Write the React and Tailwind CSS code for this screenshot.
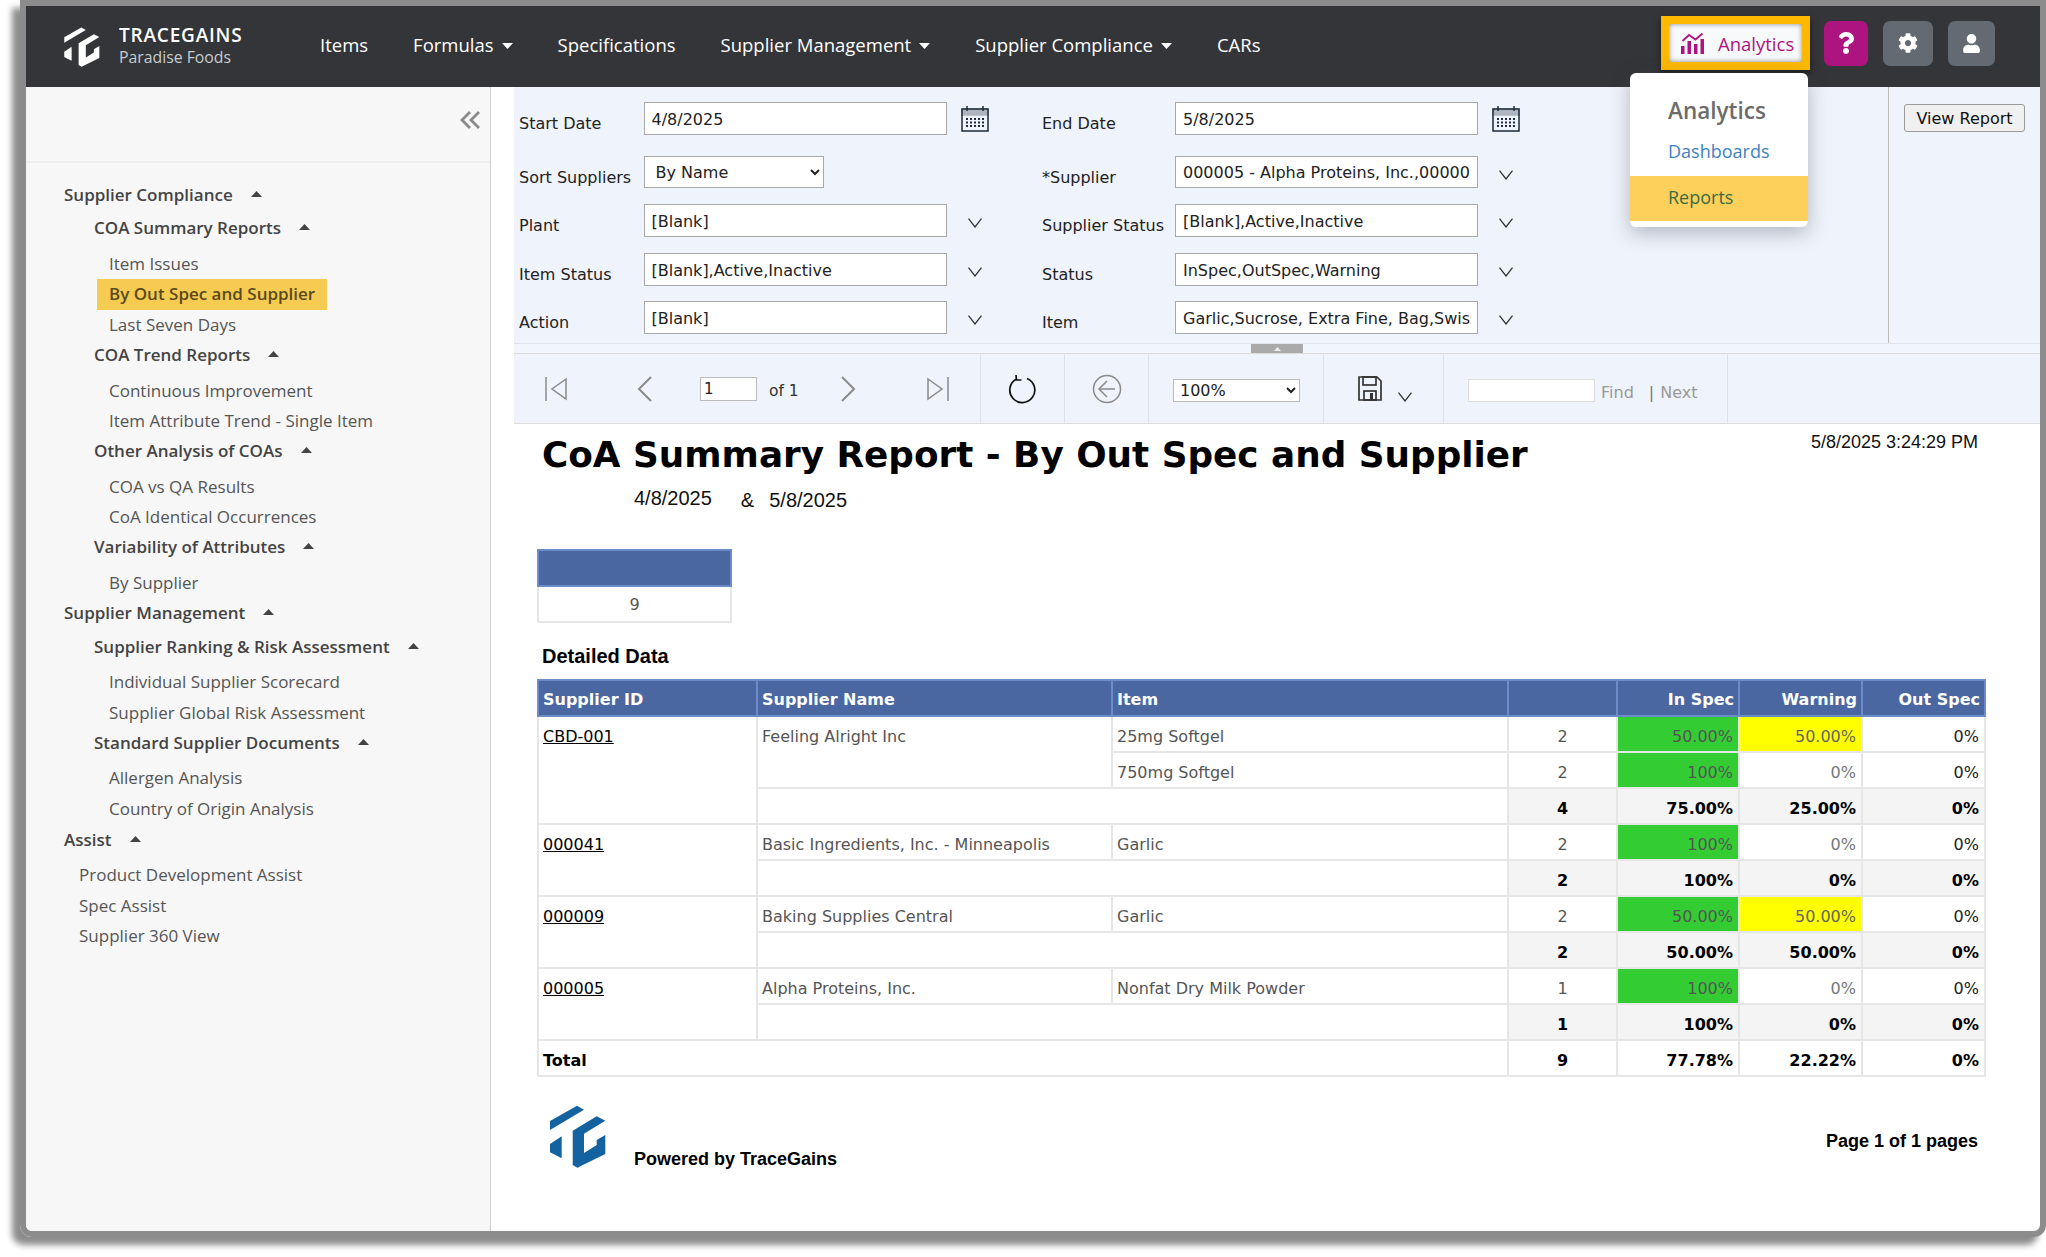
import React from "react";
import { FaCog, FaUser, FaQuestion } from "react-icons/fa";

const Logo = ({ className }) => (
  <svg viewBox="0 0 56 63" className={className} fill="currentColor">
    <polygon points="0,16 27,0.7 34,4.7 0,25" />
    <polygon points="0,39 11.7,31.3 11.7,53.3 0,47.3" />
    <polygon points="22.7,25.7 46.7,11.3 55.3,15.7 34,28.7 34,48 46.7,40 46.7,35 55.3,30 55.3,49 27.3,62.7 22.7,60" />
  </svg>
);

const CaretDown = () => (
  <svg width="11" height="6" viewBox="0 0 11 6" className="ml-[8px] mt-[2px]" fill="currentColor"><polygon points="0,0 11,0 5.5,6" /></svg>
);
const CaretUp = ({ className }) => (
  <svg width="11" height="6" viewBox="0 0 11 6" className={className} fill="#444"><polygon points="0,6 11,6 5.5,0" /></svg>
);

const Chevron = ({ className = "" }) => (
  <svg width="14" height="10" viewBox="0 0 14 10" fill="none" stroke="#333" strokeWidth="1.3" className={className}><polyline points="0.5,0.7 7,9 13.5,0.7" /></svg>
);

const Calendar = () => (
  <svg width="28" height="26" viewBox="0 0 28 26" fill="none" stroke="#1d2a3a" strokeWidth="1.5" className="shrink-0">
    <rect x="1" y="3" width="26" height="22" />
    <rect x="1" y="3" width="26" height="6" fill="#1d2a3a" opacity="0.3" />
    <line x1="6" y1="0" x2="6" y2="5" /><line x1="22" y1="0" x2="22" y2="5" />
    <g fill="#1d2a3a" stroke="none">
      {[12, 15.5, 19].map((y) => [6, 10, 14, 18, 22].map((x) => <rect key={x + "-" + y} x={x - 1} y={y} width="2" height="2" />))}
    </g>
  </svg>
);

const sideItems = [
  [1, "Supplier Compliance"], [2, "COA Summary Reports"], [3, "Item Issues"], [4, "By Out Spec and Supplier"], [3, "Last Seven Days"],
  [2, "COA Trend Reports"], [3, "Continuous Improvement"], [3, "Item Attribute Trend - Single Item"],
  [2, "Other Analysis of COAs"], [3, "COA vs QA Results"], [3, "CoA Identical Occurrences"],
  [2, "Variability of Attributes"], [3, "By Supplier"],
  [1, "Supplier Management"], [2, "Supplier Ranking & Risk Assessment"], [3, "Individual Supplier Scorecard"], [3, "Supplier Global Risk Assessment"],
  [2, "Standard Supplier Documents"], [3, "Allergen Analysis"], [3, "Country of Origin Analysis"],
  [6, "Assist"], [5, "Product Development Assist"], [5, "Spec Assist"], [5, "Supplier 360 View"],
];

const SideItem = ({ level, text }) => {
  if (level === 1) return <div className="flex items-center h-[31px] mb-[3px] pl-[38px] font-semibold text-[#444]">{text}<CaretUp className="ml-[18px] -mt-[2px]" /></div>;
  if (level === 6) return <div className="flex items-center h-[31px] mt-[1px] mb-[4px] pl-[38px] font-semibold text-[#444]">{text}<CaretUp className="ml-[18px] -mt-[2px]" /></div>;
  if (level === 2) return <div className="flex items-center h-[30px] mb-[5px] pl-[68px] font-semibold text-[#444]">{text}<CaretUp className="ml-[18px] -mt-[2px]" /></div>;
  if (level === 4) return <div className="flex items-center h-[31px] ml-[71px] pl-[12px] w-[230px] bg-[#f6cb52] font-semibold text-[#5a4a1a]">{text}</div>;
  if (level === 5) return <div className="flex items-center h-[30.5px] pl-[53px] text-[#555]">{text}</div>;
  return <div className="flex items-center h-[30.5px] pl-[83px] text-[#555]">{text}</div>;
};

const Field = ({ value }) => (
  <input readOnly defaultValue={value} className="w-[303px] h-full shrink-0 bg-white border-[1.5px] border-[#a8a8a8] pl-[7px] pr-[6px] pt-[1px] text-[16px] text-[#222] outline-none" />
);

const ParamCell = ({ label, children, after, col = 1 }) => (
  <div className={`flex h-full items-stretch ${col === 1 ? "w-[523px]" : "w-[533px]"}`}>
    <div className={`shrink-0 text-[16px] text-[#222] whitespace-nowrap pt-[10px] ${col === 1 ? "w-[124.5px]" : "w-[133px]"}`}>{label}</div>
    {children}
    {after}
  </div>
);

const Dd = () => <div className="flex items-center pl-[21px] pt-[5px]"><Chevron /></div>;
const Cal = () => <div className="flex items-center pl-[14px]"><Calendar /></div>;

const Params = () => (
  <div className="flex h-[257px] bg-[#eff3fb] border-b border-[#dfe3ea] font-['DejaVu_Sans',sans-serif]">
    <div className="w-[1374px] flex flex-col pt-[15px] pl-[5px] shrink-0">
      <div className="flex h-[33px] mb-[21px]">
        <ParamCell label="Start Date" after={<Cal />}><Field value="4/8/2025" /></ParamCell>
        <ParamCell col={2} label="End Date" after={<Cal />}><Field value="5/8/2025" /></ParamCell>
      </div>
      <div className="flex h-[32px] mb-[16px]">
        <ParamCell label="Sort Suppliers">
          <select defaultValue="By Name" className="w-[180px] h-full bg-white border-[1.5px] border-[#a8a8a8] pl-[7px] text-[16px] text-[#222] outline-none">
            <option>By Name</option>
          </select>
        </ParamCell>
        <ParamCell col={2} label="*Supplier" after={<Dd />}><Field value="000005 - Alpha Proteins, Inc.,000009 - Baking" /></ParamCell>
      </div>
      <div className="flex h-[33px] mb-[16px]">
        <ParamCell label="Plant" after={<Dd />}><Field value="[Blank]" /></ParamCell>
        <ParamCell col={2} label="Supplier Status" after={<Dd />}><Field value="[Blank],Active,Inactive" /></ParamCell>
      </div>
      <div className="flex h-[33px] mb-[15px]">
        <ParamCell label="Item Status" after={<Dd />}><Field value="[Blank],Active,Inactive" /></ParamCell>
        <ParamCell col={2} label="Status" after={<Dd />}><Field value="InSpec,OutSpec,Warning" /></ParamCell>
      </div>
      <div className="flex h-[33px]">
        <ParamCell label="Action" after={<Dd />}><Field value="[Blank]" /></ParamCell>
        <ParamCell col={2} label="Item" after={<Dd />}><Field value="Garlic,Sucrose, Extra Fine, Bag,Swiss" /></ParamCell>
      </div>
    </div>
    <div className="flex-1 border-l-[1.5px] border-[#bbb] pt-[17px] pl-[15px]">
      <button className="w-[121px] h-[28px] bg-[#f0f0f0] border-[1.5px] border-[#9a9a9a] rounded-[3px] pt-[1px] text-[16px] text-[#111]">View Report</button>
    </div>
  </div>
);

const TbSec = ({ w, children }) => (
  <div className={`${w} h-full shrink-0 flex items-center border-r border-[#dde1e8]`}>{children}</div>
);

const Toolbar = () => (
  <div className="flex h-[70px] bg-[#eff3fb] border-b border-[#dcdcdc] text-[16px] font-['DejaVu_Sans',sans-serif]">
    <TbSec w="w-[467px]">
      <svg width="22" height="24" viewBox="0 0 22 24" fill="none" stroke="#8a8a8a" strokeWidth="1.5" className="ml-[31px]"><line x1="1" y1="0" x2="1" y2="24" /><polygon points="21,2 7,12 21,22" /></svg>
      <svg width="15" height="26" viewBox="0 0 15 26" fill="none" stroke="#8a8a8a" strokeWidth="2" className="ml-[70px]"><polyline points="14,1 2,13 14,25" /></svg>
      <input readOnly defaultValue="1" className="ml-[48px] w-[57px] h-[24px] bg-white border-[1.5px] border-[#bbb] px-[3px] text-[15px] text-[#222] outline-none" />
      <span className="ml-[12px] w-[72px] text-[15.5px] text-[#333] pt-[6px]">of 1</span>
      <svg width="15" height="26" viewBox="0 0 15 26" fill="none" stroke="#8a8a8a" strokeWidth="2"><polyline points="1,1 13,13 1,25" /></svg>
      <svg width="22" height="24" viewBox="0 0 22 24" fill="none" stroke="#8a8a8a" strokeWidth="1.5" className="ml-[71px]"><line x1="21" y1="0" x2="21" y2="24" /><polygon points="1,2 15,12 1,22" /></svg>
    </TbSec>
    <TbSec w="w-[84px]">
      <svg width="30" height="30" viewBox="0 0 30 30" fill="none" stroke="#111" strokeWidth="1.7" className="ml-[27px]"><path d="M19 4.5 A12.5 12.5 0 1 1 8.5 5" /><polyline points="8,1 8.5,6 13.5,6" /></svg>
    </TbSec>
    <TbSec w="w-[84px]">
      <svg width="30" height="30" viewBox="0 0 30 30" fill="none" stroke="#8a8a8a" strokeWidth="1.5" className="ml-[27px]"><circle cx="15" cy="15" r="13.5" /><line x1="7" y1="15" x2="23" y2="15" /><polyline points="15,7 7,15 15,23" /></svg>
    </TbSec>
    <TbSec w="w-[175px]">
      <select defaultValue="100%" className="ml-[24px] mt-[3px] w-[127px] h-[23px] bg-white border-[1.5px] border-[#bbb] pl-[2px] text-[16px] text-[#222] outline-none"><option>100%</option></select>
    </TbSec>
    <TbSec w="w-[120px]">
      <svg width="24" height="25" viewBox="0 0 24 25" fill="none" stroke="#333" strokeWidth="1.7" className="ml-[34px] shrink-0"><path d="M1 1 H19 L23 5 V24 H1 Z" /><rect x="5" y="1" width="13" height="8" /><rect x="6" y="15" width="12" height="9" /><rect x="12" y="17" width="3" height="7" fill="#333" stroke="none" /></svg>
      <Chevron className="ml-[16px] mt-[16px] w-[14px]" />
    </TbSec>
    <TbSec w="w-[284px]">
      <input readOnly className="ml-[24px] mt-[3px] w-[127px] h-[23px] bg-white border-[1.5px] border-[#ddd] outline-none" />
      <span className="ml-[6px] pt-[8px] text-[#999]">Find</span>
      <span className="ml-[15px] pt-[8px] text-[#777]">|</span>
      <span className="ml-[6px] pt-[8px] text-[#999]">Next</span>
    </TbSec>
  </div>
);

const cols = ["w-[219px]", "w-[355px]", "w-[396px]", "w-[109px]", "w-[122px]", "w-[123px]", "w-[123px]"];
const bd = "border-2 border-[#e6e6e6] pt-[5px]";
const Th = ({ children, right }) => <th className={`border-2 border-[#6b8bc9] bg-[#4a67a1] text-white font-bold h-[36px] px-[4px] pt-[3px] ${right ? "text-right" : "text-left"}`}>{children}</th>;
const num = `${bd} px-[5px] text-right`;

const Pct = ({ v, kind }) => {
  const on = v !== "0%";
  if (kind === "in") return <td className={`${num} bg-[#33cc33] text-[#555]`}>{v}</td>;
  if (kind === "warn") return <td className={`${num} ${on ? "bg-[#ffff00] text-[#666]" : "text-[#777]"}`}>{v}</td>;
  return <td className={`${num} text-[#222]`}>{v}</td>;
};

const DataRow = ({ n, a, b, c }) => (
  <>
    <td className={`${bd} text-center text-[#555]`}>{n}</td>
    <Pct v={a} kind="in" /><Pct v={b} kind="warn" /><Pct v={c} />
  </>
);

const SubRow = ({ n, a, b, c }) => (
  <tr className="h-[36px]">
    <td colSpan={2} className={bd}></td>
    <td className={`${bd} text-center bg-[#f4f4f4] font-bold text-black`}>{n}</td>
    {[a, b, c].map((v, i) => <td key={i} className={`${num} bg-[#f4f4f4] font-bold text-black`}>{v}</td>)}
  </tr>
);

const tdTop = "border-2 border-[#e6e6e6] align-top pt-[8px] px-[4px]";

const Group = ({ id, name, rows, sub }) => (
  <>
    {rows.map((r, i) => (
      <tr key={i} className="h-[36px]">
        {i === 0 && <td rowSpan={rows.length + 1} className={tdTop}><a className="underline text-black">{id}</a></td>}
        {i === 0 && <td rowSpan={rows.length} className={`${tdTop} text-[#555]`}>{name}</td>}
        <td className={`${bd} px-[4px] text-[#555]`}>{r[0]}</td>
        <DataRow n={r[1]} a={r[2]} b={r[3]} c={r[4]} />
      </tr>
    ))}
    <SubRow n={sub[0]} a={sub[1]} b={sub[2]} c={sub[3]} />
  </>
);

const Report = () => (
  <div className="bg-white pl-[23px] pr-[55px] relative">
    <div className="flex justify-between items-start font-['Liberation_Sans',sans-serif]">
      <h1 className="ml-[5px] mt-[8px] font-['DejaVu_Sans',sans-serif] font-bold text-[35.8px] leading-[46px] text-black whitespace-nowrap">CoA Summary Report - By Out Spec and Supplier</h1>
      <div className="text-[18px] leading-[22px] mt-[7px] mr-[7px] text-[#111]">5/8/2025 3:24:29 PM</div>
    </div>
    <div className="flex font-['Liberation_Sans',sans-serif] text-[20px] text-[#111] pl-[97px] mt-[8px] leading-[24px]">
      <span>4/8/2025</span><span className="ml-[29px] mt-[2px]">&amp;</span><span className="ml-[15px] mt-[2px]">5/8/2025</span>
    </div>
    <div className="mt-[37px] w-[195px] text-[16px] font-['DejaVu_Sans',sans-serif]">
      <div className="h-[38px] bg-[#4a67a1] border-2 border-[#6b8bc9]"></div>
      <div className="h-[36px] pt-[2px] border-x-2 border-b-2 border-[#e6e6e6] flex items-center justify-center text-[#555]">9</div>
    </div>
    <div className="ml-[5px] mt-[21px] font-['Liberation_Sans',sans-serif] font-bold text-[20px] leading-[24px] text-black">Detailed Data</div>
    <table className="mt-[11px] table-fixed border-collapse w-[1447px] text-[16px] font-['DejaVu_Sans',sans-serif]">
      <colgroup>{cols.map((c, i) => <col key={i} className={c} />)}</colgroup>
      <thead>
        <tr>
          <Th>Supplier ID</Th><Th>Supplier Name</Th><Th>Item</Th><Th></Th><Th right>In Spec</Th><Th right>Warning</Th><Th right>Out Spec</Th>
        </tr>
      </thead>
      <tbody>
        <Group id="CBD-001" name="Feeling Alright Inc" rows={[["25mg Softgel", 2, "50.00%", "50.00%", "0%"], ["750mg Softgel", 2, "100%", "0%", "0%"]]} sub={[4, "75.00%", "25.00%", "0%"]} />
        <Group id="000041" name="Basic Ingredients, Inc. - Minneapolis" rows={[["Garlic", 2, "100%", "0%", "0%"]]} sub={[2, "100%", "0%", "0%"]} />
        <Group id="000009" name="Baking Supplies Central" rows={[["Garlic", 2, "50.00%", "50.00%", "0%"]]} sub={[2, "50.00%", "50.00%", "0%"]} />
        <Group id="000005" name="Alpha Proteins, Inc." rows={[["Nonfat Dry Milk Powder", 1, "100%", "0%", "0%"]]} sub={[1, "100%", "0%", "0%"]} />
        <tr className="h-[36px] font-bold text-black">
          <td colSpan={3} className={`${bd} px-[4px]`}>Total</td>
          <td className={`${bd} text-center`}>9</td>
          <td className={num}>77.78%</td><td className={num}>22.22%</td><td className={num}>0%</td>
        </tr>
      </tbody>
    </table>
    <div className="flex justify-between mt-[28px] font-['Liberation_Sans',sans-serif] font-bold text-[18px] text-black">
      <div className="flex items-end">
        <Logo className="ml-[13px] w-[56px] h-[63px] text-[#1463a0]" />
        <span className="ml-[28px] -mb-[5px]">Powered by TraceGains</span>
      </div>
      <span className="mt-[23px] mr-[7px]">Page 1 of 1 pages</span>
    </div>
  </div>
);

const Header = () => (
  <div className="flex items-center h-[81px] bg-[#333538] text-white shrink-0">
    <Logo className="ml-[38px] w-[36px] h-[40px] text-white shrink-0" />
    <div className="ml-[19px] w-[201px] -mt-[3px] flex flex-col shrink-0">
      <span className="text-[19px] leading-[24px] font-semibold tracking-[0.8px]">TRACEGAINS</span>
      <span className="text-[15.8px] leading-[20px] text-[#c8ccd0]">Paradise Foods</span>
    </div>
    <nav className="flex items-center gap-[45px] text-[18.5px] -mt-[3px] whitespace-nowrap">
      <span>Items</span>
      <span className="flex items-center">Formulas<CaretDown /></span>
      <span>Specifications</span>
      <span className="flex items-center">Supplier Management<CaretDown /></span>
      <span className="flex items-center">Supplier Compliance<CaretDown /></span>
      <span>CARs</span>
    </nav>
    <div className="ml-auto flex items-center mr-[45px] -mt-[7px]">
      <div className="relative">
        <div className="w-[149px] h-[54px] border-[8px] border-[#fdb900] bg-[#f8f9fa] flex items-center pl-[12px] shadow-[inset_0_0_5px_rgba(0,0,0,0.45),0_3px_6px_rgba(0,0,0,0.5)]">
          <svg width="23" height="22" viewBox="0 0 23 22" fill="#ae1480">
            <rect x="0" y="14" width="3.5" height="8" /><rect x="6.5" y="9" width="3.5" height="13" /><rect x="13" y="12" width="3.5" height="10" /><rect x="19.5" y="7" width="3.5" height="15" />
            <polyline points="1.5,9 8,3 14.5,7.5 21.5,1.5" fill="none" stroke="#ae1480" strokeWidth="1.8" />
          </svg>
          <span className="ml-[14px] pt-[2px] text-[18.5px] text-[#ae1480]">Analytics</span>
        </div>
        <div className="absolute z-10 left-[-31px] top-[57px] w-[178px] h-[154px] bg-white rounded-[6px] overflow-hidden shadow-[0_6px_20px_rgba(60,70,90,0.35)]">
          <div className="pl-[38px] pt-[21px] text-[22.5px] leading-[34px] font-semibold text-[#6c6c6c]">Analytics</div>
          <div className="pl-[38px] mt-[9px] text-[18px] leading-[28px] text-[#3f82c2]">Dashboards</div>
          <div className="mt-[10.5px] h-[45px] pb-[2px] bg-[#fdd05b] pl-[38px] flex items-center text-[18px] text-[#3d6b42]">Reports</div>
        </div>
      </div>
      <div className="ml-[14px] w-[44px] h-[45px] rounded-[7px] bg-[#ae1480] flex items-center justify-center"><FaQuestion className="text-[22px]" /></div>
      <div className="ml-[15px] w-[50px] h-[45px] rounded-[7px] bg-[#636a72] flex items-center justify-center"><FaCog className="text-[20px]" /></div>
      <div className="ml-[15px] w-[47px] h-[45px] rounded-[7px] bg-[#636a72] flex items-center justify-center"><FaUser className="text-[19px]" /></div>
    </div>
  </div>
);

export default function App() {
  return (
    <div className="w-[2046px] h-[1257px] bg-white overflow-hidden font-['Open_Sans',sans-serif]">
      <div className="ml-[20px] h-[1237px] border-[6px] border-[#8c8c8c] rounded-b-[12px] shadow-[-8px_8px_6px_rgba(0,0,0,0.45)] flex flex-col">
        <Header />
        <div className="flex flex-1 min-h-0 rounded-b-[6px] overflow-hidden">
          <aside className="w-[465px] shrink-0 bg-[#f7f7f7] border-r border-[#d0d0d0] text-[17px] whitespace-nowrap">
            <div className="h-[76px] border-b-2 border-[#eee] flex justify-end items-start pr-[9px] pt-[24px]">
              <svg width="21" height="18" viewBox="0 0 21 18" fill="none" stroke="#8a8a8a" strokeWidth="2.8"><polyline points="10,1 2,9 10,17" /><polyline points="19,1 11,9 19,17" /></svg>
            </div>
            <div className="pt-[16px]">
              {sideItems.map(([l, t]) => <SideItem key={t} level={l} text={t} />)}
            </div>
          </aside>
          <main className="flex-1 min-w-0 ml-[23px] flex flex-col">
            <Params />
            <div className="h-[10px] bg-[#f0f6fc] border-b border-[#dcdcdc] flex justify-center relative">
              <div className="absolute left-[737px] top-0 w-[52px] h-[9px] bg-[#aaa] flex items-center justify-center">
                <svg width="7" height="4" viewBox="0 0 7 4" fill="#eee"><polygon points="0,4 7,4 3.5,0" /></svg>
              </div>
            </div>
            <Toolbar />
            <Report />
          </main>
        </div>
      </div>
    </div>
  );
}
